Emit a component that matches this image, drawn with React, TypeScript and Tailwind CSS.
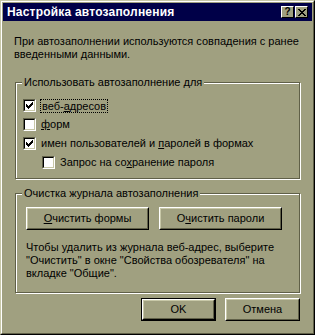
import React from "react";

const FONT = { fontFamily: '"Liberation Sans", Arial, sans-serif' };

function Check({ checked }: { checked?: boolean }) {
  return (
    <span className="inline-block w-[13px] h-[13px] shrink-0 border border-t-[#606048] border-l-[#606048] border-r-white border-b-white">
      <span className="block w-full h-full bg-white border border-t-black border-l-black border-r-[#c8c8a8] border-b-[#c8c8a8]">
        {checked && (
          <svg width="9" height="9" viewBox="0 0 9 9" className="block" shapeRendering="crispEdges">
            <path
              d="M1 3h1v3h-1z M2 4h1v3h-1z M3 5h1v3h-1z M4 4h1v3h-1z M5 3h1v3h-1z M6 2h1v3h-1z M7 1h1v3h-1z"
              fill="black"
            />
          </svg>
        )}
      </span>
    </span>
  );
}

function Btn({
  children,
  def,
  className = "",
}: {
  children: React.ReactNode;
  def?: boolean;
  className?: string;
}) {
  const inner = (
    <div className="w-full h-full border border-t-white border-l-white border-r-black border-b-black">
      <div className="w-full h-full flex items-center justify-center border border-t-[#c8c8a8] border-l-[#c8c8a8] border-r-[#606048] border-b-[#606048] text-[11px] text-black">
        {children}
      </div>
    </div>
  );
  return (
    <div className={`h-[23px] ${className}`}>
      {def ? <div className="w-full h-full border border-black">{inner}</div> : inner}
    </div>
  );
}

function Group({
  title,
  className = "",
  children,
}: {
  title: string;
  className?: string;
  children: React.ReactNode;
}) {
  return (
    <div
      className={`relative border border-[#606048] shadow-[inset_1px_1px_0_white,1px_1px_0_white] ${className}`}
    >
      <span className="absolute left-[6px] top-[-8px] px-[2px] bg-[#a0a080] text-[11px] leading-[14px] text-black">
        {title}
      </span>
      {children}
    </div>
  );
}

export default function App() {
  return (
    <div style={FONT} className="w-[315px] h-[335px] bg-[#a0a080] text-black">
      <div className="w-full h-full border border-t-[#c8c8a8] border-l-[#c8c8a8] border-r-black border-b-black">
        <div className="w-full h-full border border-t-white border-l-white border-r-[#606048] border-b-[#606048] p-px flex flex-col">
          {/* title bar */}
          <div className="h-[18px] bg-[#000048] flex items-center pl-[4px] pr-[4px]">
            <span className="text-white font-bold text-[12px] tracking-[0.2px] leading-none flex-1">
              Настройка автозаполнения
            </span>
            <div className="flex gap-[1px]">
              <div className="w-[13px] h-[12px] border border-t-white border-l-white border-r-black border-b-black bg-[#a0a080] flex items-center justify-center text-[10px] font-bold leading-none">
                ?
              </div>
              <div className="w-[13px] h-[12px] border border-t-white border-l-white border-r-black border-b-black bg-[#a0a080] flex items-center justify-center">
                <svg width="8" height="7" viewBox="0 0 8 7" shapeRendering="crispEdges">
                  <path
                    d="M0 0h2v1h-2z M6 0h2v1h-2z M1 1h2v1h-2z M5 1h2v1h-2z M2 2h4v1h-4z M3 3h2v1h-2z M2 4h4v1h-4z M1 5h2v1h-2z M5 5h2v1h-2z M0 6h2v1h-2z M6 6h2v1h-2z"
                    fill="black"
                  />
                </svg>
              </div>
            </div>
          </div>

          <div className="flex flex-col px-[11px] pt-[14px] text-[11px] leading-[13px]">
            <p>
              При автозаполнении используются совпадения с ранее
              <br />
              введенными данными.
            </p>

            <Group title="Использовать автозаполнение для" className="mt-[21px] mx-px h-[97px] pt-[13px] pl-[7px]">
              <div className="flex items-center h-[19px] gap-[4px]">
                <Check checked />
                <span className="border border-dotted border-black px-px leading-[12px]">
                  веб-<u>а</u>дресов
                </span>
              </div>
              <div className="flex items-center h-[19px] gap-[5px]">
                <Check />
                <span>
                  <u>ф</u>орм
                </span>
              </div>
              <div className="flex items-center h-[19px] gap-[5px]">
                <Check checked />
                <span>
                  имен пользователей и <u>п</u>аролей в формах
                </span>
              </div>
              <div className="flex items-center h-[19px] gap-[5px] pl-[19px]">
                <Check />
                <span>
                  Запрос на со<u>х</u>ранение пароля
                </span>
              </div>
            </Group>

            <Group title="Очистка журнала автозаполнения" className="mt-[14px] mx-px h-[100px] pt-[13px] pl-[10px]">
              <div className="flex gap-[10px]">
                <Btn className="w-[123px]">
                  <span>
                    <u>О</u>чистить формы
                  </span>
                </Btn>
                <Btn className="w-[123px]">
                  <span>
                    О<u>ч</u>истить пароли
                  </span>
                </Btn>
              </div>
              <p className="mt-[11px]">
                Чтобы удалить из журнала веб-адрес, выберите
                <br />
                "Очистить" в окне "Свойства обозревателя" на
                <br />
                вкладке "Общие".
              </p>
            </Group>

            <div className="flex justify-end gap-[9px] mt-[5px] pr-px">
              <Btn def className="w-[75px]">
                OK
              </Btn>
              <Btn className="w-[75px]">Отмена</Btn>
            </div>
          </div>
        </div>
      </div>
    </div>
  );
}
